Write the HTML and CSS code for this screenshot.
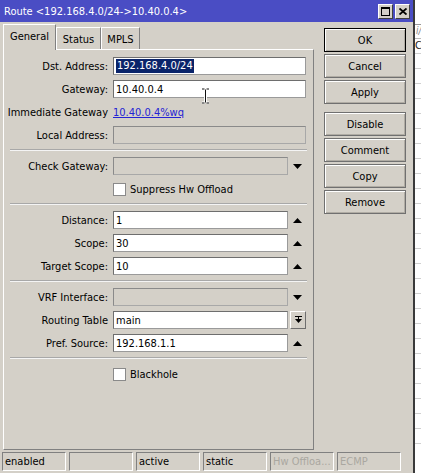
FILE: index.html
```html
<!DOCTYPE html>
<html>
<head>
<meta charset="utf-8">
<link rel="stylesheet" href="styles.css">
</head>
<body>
<div class="window">
  <div class="titlebar">
    <span class="title">Route &lt;192.168.4.0/24-&gt;10.40.0.4&gt;</span>
    <div class="tb-btns">
      <span class="tb-btn"><svg width="9" height="9" viewBox="0 0 9 9"><rect x="0.5" y="0.5" width="8" height="8" fill="none" stroke="#000"/><rect x="0" y="0" width="9" height="2" fill="#000"/></svg></span>
      <span class="tb-btn"><svg width="8" height="7" viewBox="0 0 8 7"><path d="M0.5 0.5L7.5 6.5M7.5 0.5L0.5 6.5" stroke="#000" stroke-width="1.8"/></svg></span>
    </div>
  </div>
  <div class="main">
    <div class="left">
      <div class="tabs">
        <div class="tab active t-general">General</div>
        <div class="tab t-status">Status</div>
        <div class="tab t-mpls">MPLS</div>
      </div>
      <div class="panel">
        <div class="row"><span class="label">Dst. Address:</span><div class="field wide"><span class="sel">192.168.4.0/24</span></div></div>
        <div class="row"><span class="label">Gateway:</span><div class="field wide">10.40.0.4</div></div>
        <div class="row"><span class="label">Immediate Gateway</span><a class="link">10.40.0.4%wq</a></div>
        <div class="row"><span class="label">Local Address:</span><div class="field wide disabled"></div></div>
        <div class="sep"></div>
        <div class="row"><span class="label">Check Gateway:</span><div class="field disabled"></div><span class="arrow"><svg width="9" height="5" viewBox="0 0 9 5"><path d="M0 0H9L4.5 5Z"/></svg></span></div>
        <div class="row"><span class="label"></span><span class="check"></span><span class="check-label">Suppress Hw Offload</span></div>
        <div class="sep"></div>
        <div class="row"><span class="label">Distance:</span><div class="field">1</div><span class="arrow"><svg width="9" height="5" viewBox="0 0 9 5"><path d="M0 5H9L4.5 0Z"/></svg></span></div>
        <div class="row"><span class="label">Scope:</span><div class="field">30</div><span class="arrow"><svg width="9" height="5" viewBox="0 0 9 5"><path d="M0 5H9L4.5 0Z"/></svg></span></div>
        <div class="row"><span class="label">Target Scope:</span><div class="field">10</div><span class="arrow"><svg width="9" height="5" viewBox="0 0 9 5"><path d="M0 5H9L4.5 0Z"/></svg></span></div>
        <div class="sep"></div>
        <div class="row"><span class="label">VRF Interface:</span><div class="field disabled"></div><span class="arrow"><svg width="9" height="5" viewBox="0 0 9 5"><path d="M0 0H9L4.5 5Z"/></svg></span></div>
        <div class="row"><span class="label">Routing Table</span><div class="field">main</div><span class="arrow"><span class="mini-btn"><svg width="7" height="8" viewBox="0 0 7 8"><rect x="0" y="0" width="7" height="1"/><rect x="3" y="1" width="1" height="2"/><path d="M0 3H7L3.5 7Z"/></svg></span></span></div>
        <div class="row"><span class="label">Pref. Source:</span><div class="field">192.168.1.1</div><span class="arrow"><svg width="9" height="5" viewBox="0 0 9 5"><path d="M0 5H9L4.5 0Z"/></svg></span></div>
        <div class="sep"></div>
        <div class="row"><span class="label"></span><span class="check"></span><span class="check-label">Blackhole</span></div>
      </div>
    </div>
    <div class="buttons">
      <div class="btn default">OK</div>
      <div class="btn">Cancel</div>
      <div class="btn">Apply</div>
      <div class="btn spaced">Disable</div>
      <div class="btn">Comment</div>
      <div class="btn">Copy</div>
      <div class="btn">Remove</div>
    </div>
  </div>
  <div class="statusbar">
    <div class="cell">enabled</div>
    <div class="cell"></div>
    <div class="cell">active</div>
    <div class="cell">static</div>
    <div class="cell dim">Hw Offloa...</div>
    <div class="cell dim">ECMP</div>
  </div>
  <svg class="ibeam" width="9" height="16" viewBox="0 0 9 16"><path d="M1 1H3.5M5.5 1H8M4.5 1.5V14.5M1 15H3.5M5.5 15H8" stroke="#fff" stroke-width="3" fill="none"/><path d="M1 1H3.5M5.5 1H8M4.5 1.5V14.5M1 15H3.5M5.5 15H8" stroke="#111" stroke-width="1" fill="none"/></svg>
</div>
<div class="behind">
  <div class="bh-head">i/</div>
  <div class="bh-row">C</div>
  <div class="bh-row"></div>
  <div class="bh-row"></div>
  <div class="bh-row"></div>
  <div class="bh-row"></div>
  <div class="bh-row"></div>
  <div class="bh-row"></div>
  <div class="bh-row"></div>
  <div class="bh-row"></div>
  <div class="bh-row"></div>
  <div class="bh-row"></div>
  <div class="bh-row"></div>
  <div class="bh-row"></div>
  <div class="bh-row"></div>
  <div class="bh-row"></div>
  <div class="bh-row"></div>
  <div class="bh-row"></div>
  <div class="bh-row"></div>
  <div class="bh-row"></div>
  <div class="bh-row"></div>
  <div class="bh-row"></div>
  <div class="bh-row"></div>
  <div class="bh-row"></div>
  <div class="bh-row"></div>
  <div class="bh-row"></div>
  <div class="bh-row"></div>
  <div class="bh-row"></div>
</div>
</body>
</html>
```

FILE: styles.css
```css
* { box-sizing: border-box; }
html, body { margin: 0; padding: 0; }
body {
  width: 421px;
  height: 473px;
  overflow: hidden;
  display: flex;
  font-family: "DejaVu Sans Condensed", "DejaVu Sans", sans-serif;
  font-stretch: condensed;
  font-size: 11px;
  color: #000;
  background: #fff;
}
.window {
  width: 415px;
  height: 473px;
  flex: none;
  background: #d4d0c8;
  border-right: 2px solid #3a3a3a;
  display: flex;
  flex-direction: column;
  position: relative;
}
.titlebar {
  height: 22px;
  background: #4a4dc4;
  color: #fff;
  display: flex;
  align-items: center;
  padding: 0 3px 0 4px;
  font-size: 11px;
}
.title { flex: 1; white-space: nowrap; }
.tb-btns { display: flex; gap: 2px; }
.tb-btn {
  width: 15px;
  height: 15px;
  background: #d4d0c8;
  border: 1px solid;
  border-color: #fff #404040 #404040 #fff;
  display: flex;
  align-items: center;
  justify-content: center;
}
.main { display: flex; height: 428px; }
.left {
  margin-left: 3px;
  width: 311px;
  padding-top: 2px;
  display: flex;
  flex-direction: column;
}
.tabs {
  display: flex;
  height: 25px;
  align-items: flex-end;
  position: relative;
  z-index: 1;
}
.tab {
  height: 22px;
  border: 1px solid;
  border-bottom: none;
  border-color: #fff #808080 #808080 #fff;
  display: flex;
  align-items: center;
  justify-content: center;
  padding-top: 2px;
}
.tab.active {
  height: 26px;
  margin-bottom: -1px;
  background: #d4d0c8;
  padding-top: 0;
  padding-bottom: 2px;
}
.t-general { width: 53px; }
.t-status { width: 45px; }
.t-mpls { width: 39px; }
.panel {
  height: 401px;
  border: 1px solid;
  border-color: #fff #808080 #808080 #fff;
  padding-top: 7px;
  display: flex;
  flex-direction: column;
  gap: 5px;
}
.row {
  display: flex;
  align-items: center;
  height: 18px;
}
.label {
  width: 104px;
  margin-right: 5px;
  text-align: right;
  white-space: nowrap;
  flex: none;
}
.field {
  width: 175px;
  height: 18px;
  background: #fff;
  border: 1px solid;
  border-color: #6e6e6e #9a9a9a #9a9a9a #6e6e6e;
  padding-left: 2px;
  display: flex;
  align-items: center;
  white-space: nowrap;
  flex: none;
}
.field.wide { width: 193px; }
.field.disabled { background: #d4d0c8; border-color: #8a8a8a #a8a8a8 #a8a8a8 #8a8a8a; }
.sel { background: #0a246a; color: #fff; padding: 0 1px; line-height: 14px; }
.link { color: #2424d4; text-decoration: underline; }
.arrow {
  width: 18px;
  height: 18px;
  display: flex;
  align-items: center;
  justify-content: center;
  flex: none;
}
.mini-btn {
  width: 16px;
  height: 18px;
  margin-left: 2px;
  border: 1px solid;
  border-color: #fff #6e6e6e #6e6e6e #fff;
  display: flex;
  align-items: center;
  justify-content: center;
}
.check {
  width: 13px;
  height: 13px;
  background: #fff;
  border: 1px solid #8a8a8a;
  flex: none;
}
.check-label { margin-left: 4px; }
.sep {
  height: 2px;
  margin: 0 6px 1px 6px;
  border-top: 1px solid #a8a8a8;
  border-bottom: 1px solid #f4f4f4;
}
.buttons {
  margin: 6px 0 0 10px;
  width: 82px;
  display: flex;
  flex-direction: column;
  gap: 2px;
}
.btn {
  height: 24px;
  border: 1px solid #707070;
  box-shadow: inset 1px 1px #fff, inset -1px -1px #b0aca4;
  display: flex;
  align-items: center;
  justify-content: center;
}
.btn.default { border-color: #000; }
.btn.spaced { margin-top: 6px; }
.statusbar {
  margin-top: 2px;
  height: 19px;
  padding-left: 2px;
  display: flex;
  gap: 3px;
}
.cell {
  width: 64px;
  height: 19px;
  border: 1px solid;
  border-color: #808080 #fff #fff #808080;
  padding-left: 2px;
  display: flex;
  align-items: center;
  white-space: nowrap;
  overflow: hidden;
}
.cell.dim { color: #aaa7a0; }
.ibeam { position: absolute; left: 201px; top: 88px; }
.behind {
  flex: 1;
  background: #fff;
  display: flex;
  flex-direction: column;
  overflow: hidden;
  color: #888;
}
.bh-head {
  margin-top: 24px;
  height: 15px;
  border-top: 1px solid #999;
  border-bottom: 1px solid #bbb;
  font-style: italic;
  font-size: 10px;
  padding-left: 1px;
}
.bh-row {
  height: 15px;
  flex: none;
  border-bottom: 1px solid #d0d0d0;
  color: #222;
  font-size: 11px;
}
```
